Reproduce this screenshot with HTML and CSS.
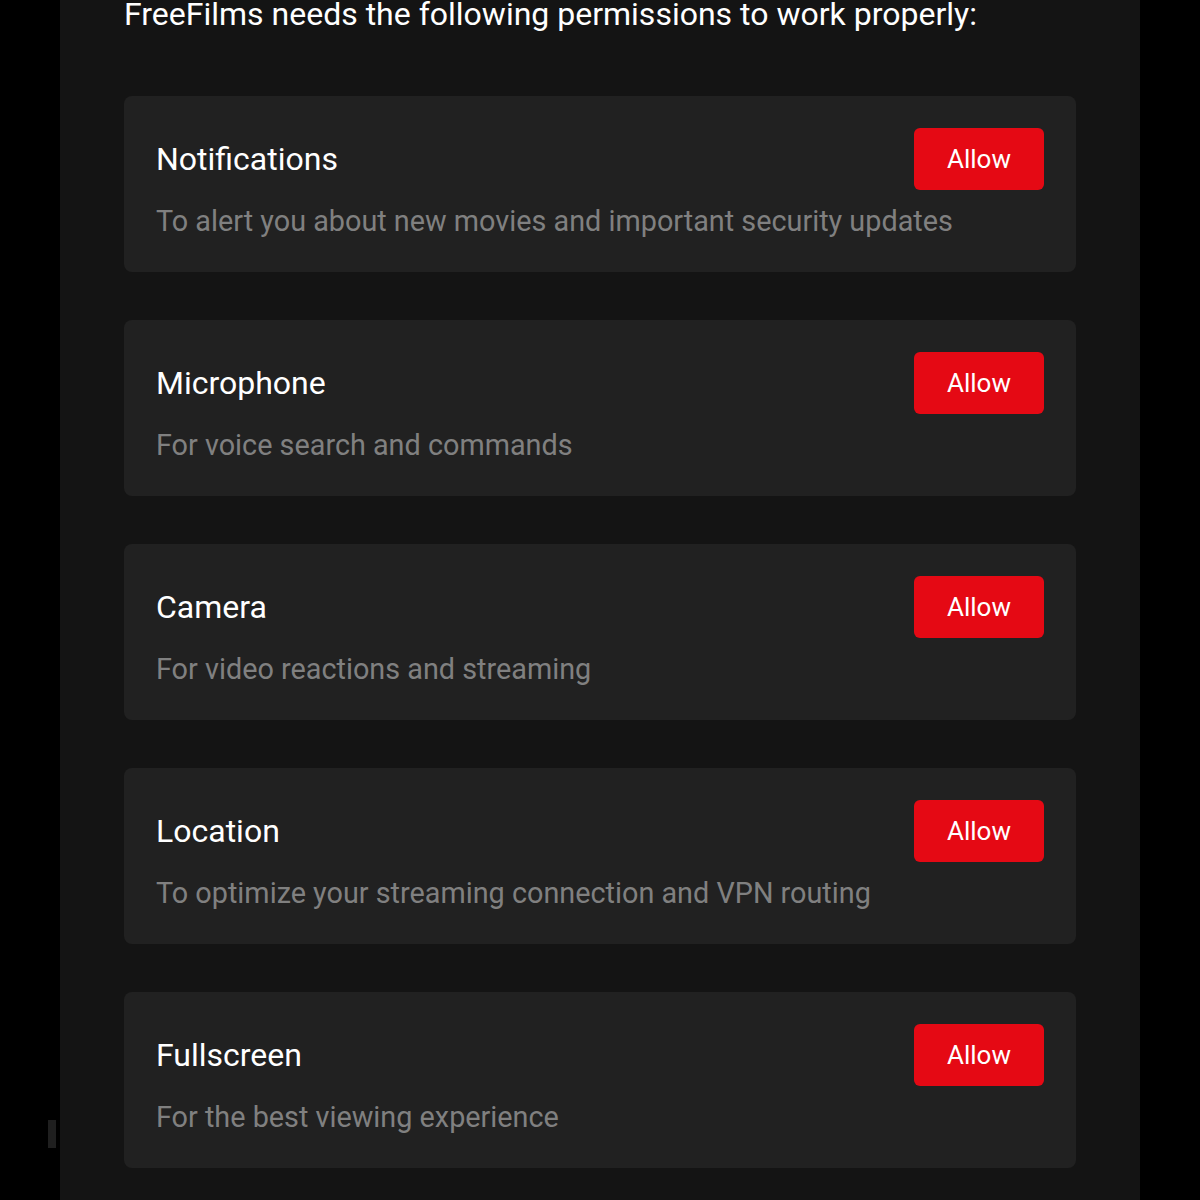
FILE: index.html
```html
<!DOCTYPE html>
<html lang="en">
<head>
    <meta charset="UTF-8">
    <meta name="viewport" content="width=device-width, initial-scale=1.0">
    <title>FreeFilms - Permissions</title>
    <link rel="stylesheet" href="styles.css">
</head>
<body>

    <div class="backdrop-tab"></div>

    <div class="panel">
        <h2 class="intro">FreeFilms needs the following permissions to work properly:</h2>

        <div class="permission-list">
            <div class="permission">
                <div class="permission-head">
                    <span class="permission-name">Notifications</span>
                    <button class="allow">Allow</button>
                </div>
                <p class="permission-desc">To alert you about new movies and important security updates</p>
            </div>
            <div class="permission">
                <div class="permission-head">
                    <span class="permission-name">Microphone</span>
                    <button class="allow">Allow</button>
                </div>
                <p class="permission-desc">For voice search and commands</p>
            </div>
            <div class="permission">
                <div class="permission-head">
                    <span class="permission-name">Camera</span>
                    <button class="allow">Allow</button>
                </div>
                <p class="permission-desc">For video reactions and streaming</p>
            </div>
            <div class="permission">
                <div class="permission-head">
                    <span class="permission-name">Location</span>
                    <button class="allow">Allow</button>
                </div>
                <p class="permission-desc">To optimize your streaming connection and VPN routing</p>
            </div>
            <div class="permission">
                <div class="permission-head">
                    <span class="permission-name">Fullscreen</span>
                    <button class="allow">Allow</button>
                </div>
                <p class="permission-desc">For the best viewing experience</p>
            </div>
        </div>
    </div>

</body>
</html>
```

FILE: styles.css
```css
body {
    font-family: Roboto, 'Noto Sans', sans-serif;
    background-color: #000000;
    color: #ffffff;
    margin: 0;
    height: 1200px;
    overflow: hidden;
    position: relative;
}

/* faint element of the page behind the dialog */
.backdrop-tab {
    position: absolute;
    left: 48px;
    top: 1120px;
    width: 8px;
    height: 28px;
    background-color: #1f1f1f;
}

.panel {
    display: flow-root;
    width: 1080px;
    margin: 0 60px;
    min-height: 1200px;
    background-color: #141414;
    padding: 0 64px;
    box-sizing: border-box;
}

/* the dialog is scrolled a little, so the heading sits under the top edge */
.intro {
    margin: -8px 0 60px;
    font-size: 32px;
    line-height: 44px;
    font-weight: 400;
    color: #ffffff;
}

.permission-list {
    display: flex;
    flex-direction: column;
    gap: 48px;
}

.permission {
    background-color: #212121;
    border-radius: 8px;
    padding: 32px;
}

.permission-head {
    display: flex;
    justify-content: space-between;
    align-items: center;
}

.permission-name {
    font-size: 32px;
    line-height: 40px;
}

.allow {
    width: 130px;
    height: 62px;
    border: none;
    border-radius: 6px;
    background-color: #e50914;
    color: #ffffff;
    font-family: Roboto, 'Noto Sans', sans-serif;
    font-size: 26px;
    cursor: pointer;
}

.permission-desc {
    margin: 13px 0 0;
    font-size: 28.8px;
    line-height: 37px;
    color: #808080;
}
```
